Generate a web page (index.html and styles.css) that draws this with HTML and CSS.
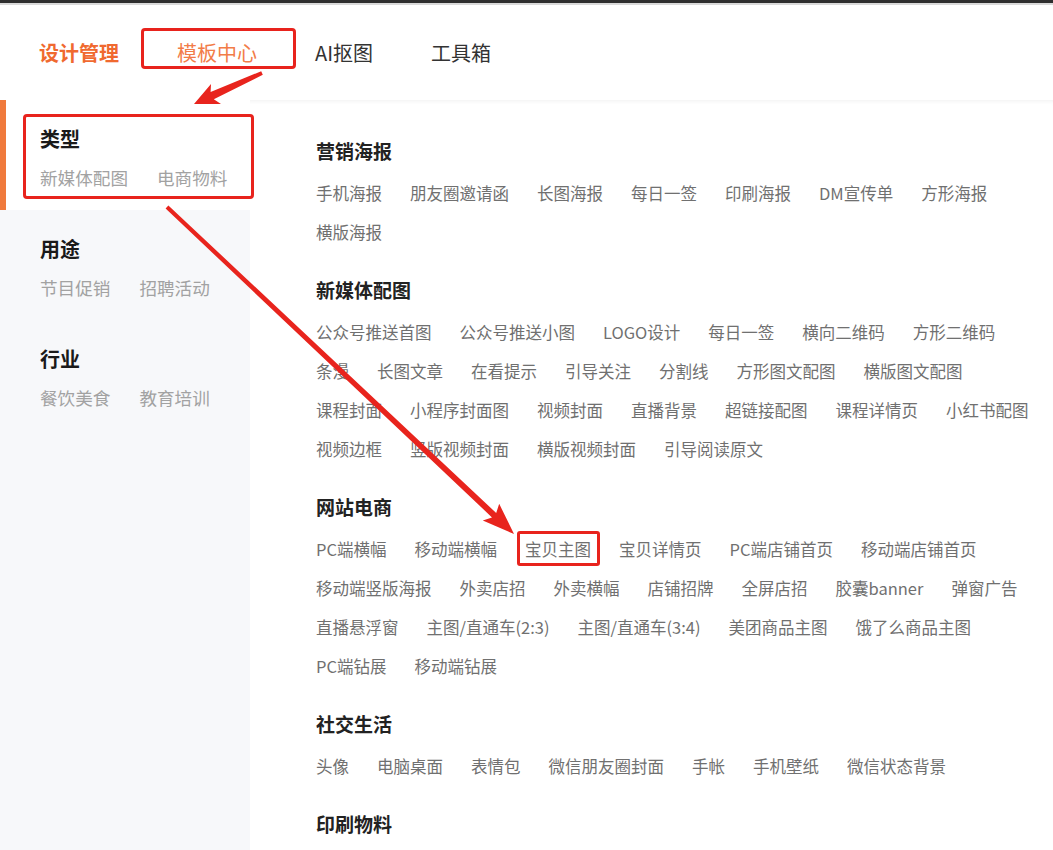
FILE: index.html
```html
<!DOCTYPE html>
<html>
<head>
    <meta charset="utf-8">
    <title>模板中心</title>
    <link rel="stylesheet" href="styles.css">
</head>
<body>
    <div class="topbar"></div>

    <nav class="nav">
        <a class="nav-item active">设计管理</a>
        <a class="nav-item current marked">模板中心</a>
        <a class="nav-item">AI抠图</a>
        <a class="nav-item">工具箱</a>
    </nav>

    <div class="main">
        <aside class="sidebar">
            <div class="side-group active marked">
                <div class="side-title">类型</div>
                <div class="side-links"><span>新媒体配图</span><span>电商物料</span></div>
            </div>
            <div class="side-group">
                <div class="side-title">用途</div>
                <div class="side-links"><span>节目促销</span><span>招聘活动</span></div>
            </div>
            <div class="side-group">
                <div class="side-title">行业</div>
                <div class="side-links"><span>餐饮美食</span><span>教育培训</span></div>
            </div>
        </aside>

        <section class="content">
            <div class="cat">
                <h3>营销海报</h3>
                <div class="tags"><span>手机海报</span><span>朋友圈邀请函</span><span>长图海报</span><span>每日一签</span><span>印刷海报</span><span>DM宣传单</span><span>方形海报</span></div>
                <div class="tags"><span>横版海报</span></div>
            </div>

            <div class="cat">
                <h3>新媒体配图</h3>
                <div class="tags"><span>公众号推送首图</span><span>公众号推送小图</span><span>LOGO设计</span><span>每日一签</span><span>横向二维码</span><span>方形二维码</span></div>
                <div class="tags"><span>条漫</span><span>长图文章</span><span>在看提示</span><span>引导关注</span><span>分割线</span><span>方形图文配图</span><span>横版图文配图</span></div>
                <div class="tags"><span>课程封面</span><span>小程序封面图</span><span>视频封面</span><span>直播背景</span><span>超链接配图</span><span>课程详情页</span><span>小红书配图</span></div>
                <div class="tags"><span>视频边框</span><span>竖版视频封面</span><span>横版视频封面</span><span>引导阅读原文</span></div>
            </div>

            <div class="cat">
                <h3>网站电商</h3>
                <div class="tags"><span>PC端横幅</span><span>移动端横幅</span><span class="marked">宝贝主图</span><span>宝贝详情页</span><span>PC端店铺首页</span><span>移动端店铺首页</span></div>
                <div class="tags"><span>移动端竖版海报</span><span>外卖店招</span><span>外卖横幅</span><span>店铺招牌</span><span>全屏店招</span><span>胶囊banner</span><span>弹窗广告</span></div>
                <div class="tags"><span>直播悬浮窗</span><span>主图/直通车(2:3)</span><span>主图/直通车(3:4)</span><span>美团商品主图</span><span>饿了么商品主图</span></div>
                <div class="tags"><span>PC端钻展</span><span>移动端钻展</span></div>
            </div>

            <div class="cat">
                <h3>社交生活</h3>
                <div class="tags"><span>头像</span><span>电脑桌面</span><span>表情包</span><span>微信朋友圈封面</span><span>手帐</span><span>手机壁纸</span><span>微信状态背景</span></div>
            </div>

            <div class="cat">
                <h3>印刷物料</h3>
            </div>
        </section>
    </div>

    <!-- annotation arrows drawn over the page -->
    <svg class="arrows" viewBox="0 0 1053 850" width="1053" height="850">
        <polygon points="261.2,71.2 262.8,74.8 213.8,99.3 221.0,104.0 194,104 211.0,84.0 210.6,92.1" />
        <polygon points="165.6,208.5 168.4,205.5 496.2,513.0 499.2,503.8 514,534 482.8,520.5 492.0,517.4" />
    </svg>
</body>
</html>
```

FILE: styles.css
```css
html, body {
    height: 100%;
}
body {
    margin: 0;
    font-family: "Noto Sans CJK SC", "Noto Sans", sans-serif;
    color: #333;
    background: #fff;
    overflow: hidden;
    position: relative;
}
.topbar {
    height: 3px;
    background-color: #2e2e2e;
    border-bottom: 2px solid #d9d9d9;
}
.nav {
    height: 95px;
    display: flex;
    align-items: center;
    gap: 58px;
    padding-left: 39px;
}
.nav-item {
    position: relative;
    font-size: 20px;
    line-height: 28px;
    color: #333;
    cursor: pointer;
}
.nav-item.active {
    color: #f0692f;
    font-weight: 600;
}
.nav-item.current {
    color: #f27c48;
}
.nav-item.marked::after {
    content: "";
    position: absolute;
    left: -36px;
    right: -39px;
    top: -11px;
    bottom: -2px;
    border: 3px solid #e8231d;
    border-radius: 4px;
}
.main {
    display: flex;
    height: calc(100% - 100px);
    box-shadow: inset 0 4px 4px -3px #f0f0f0;
}
.sidebar {
    width: 250px;
    flex-shrink: 0;
    background-color: #f7f8fa;
}
.side-group {
    position: relative;
    height: 110px;
    box-sizing: border-box;
    padding: 26px 0 0 40px;
}
.side-group.active {
    background-color: #fff;
    box-shadow: inset 6px 0 0 #f07a3c;
}
.side-group.marked::after {
    content: "";
    position: absolute;
    left: 23px;
    right: -4px;
    top: 14px;
    bottom: 11px;
    border: 3px solid #e8231d;
    border-radius: 4px;
    z-index: 2;
}
.side-title {
    font-size: 20px;
    line-height: 26px;
    font-weight: bold;
    color: #1a1a1a;
}
.side-links {
    margin-top: 14px;
    display: flex;
    gap: 29px;
    font-size: 17.6px;
    line-height: 24px;
    color: #a2a2a2;
}
.content {
    flex: 1;
    padding: 38px 15px 0 66px;
}
.cat {
    margin-bottom: 25px;
}
.cat h3 {
    margin: 0 0 10px;
    font-size: 19px;
    line-height: 26px;
    font-weight: bold;
    color: #222;
}
.tags {
    display: flex;
    gap: 28px;
    font-size: 16.5px;
    line-height: 39px;
    color: #707070;
}
.tags span {
    position: relative;
    white-space: nowrap;
    cursor: pointer;
}
.tags span.marked::after {
    content: "";
    position: absolute;
    left: -8px;
    right: -9px;
    top: 1px;
    bottom: 3px;
    border: 3px solid #e8231d;
    border-radius: 3px;
}
.arrows {
    position: absolute;
    top: 0;
    left: 0;
    pointer-events: none;
    z-index: 5;
}
.arrows polygon {
    fill: #e8241d;
}
```
